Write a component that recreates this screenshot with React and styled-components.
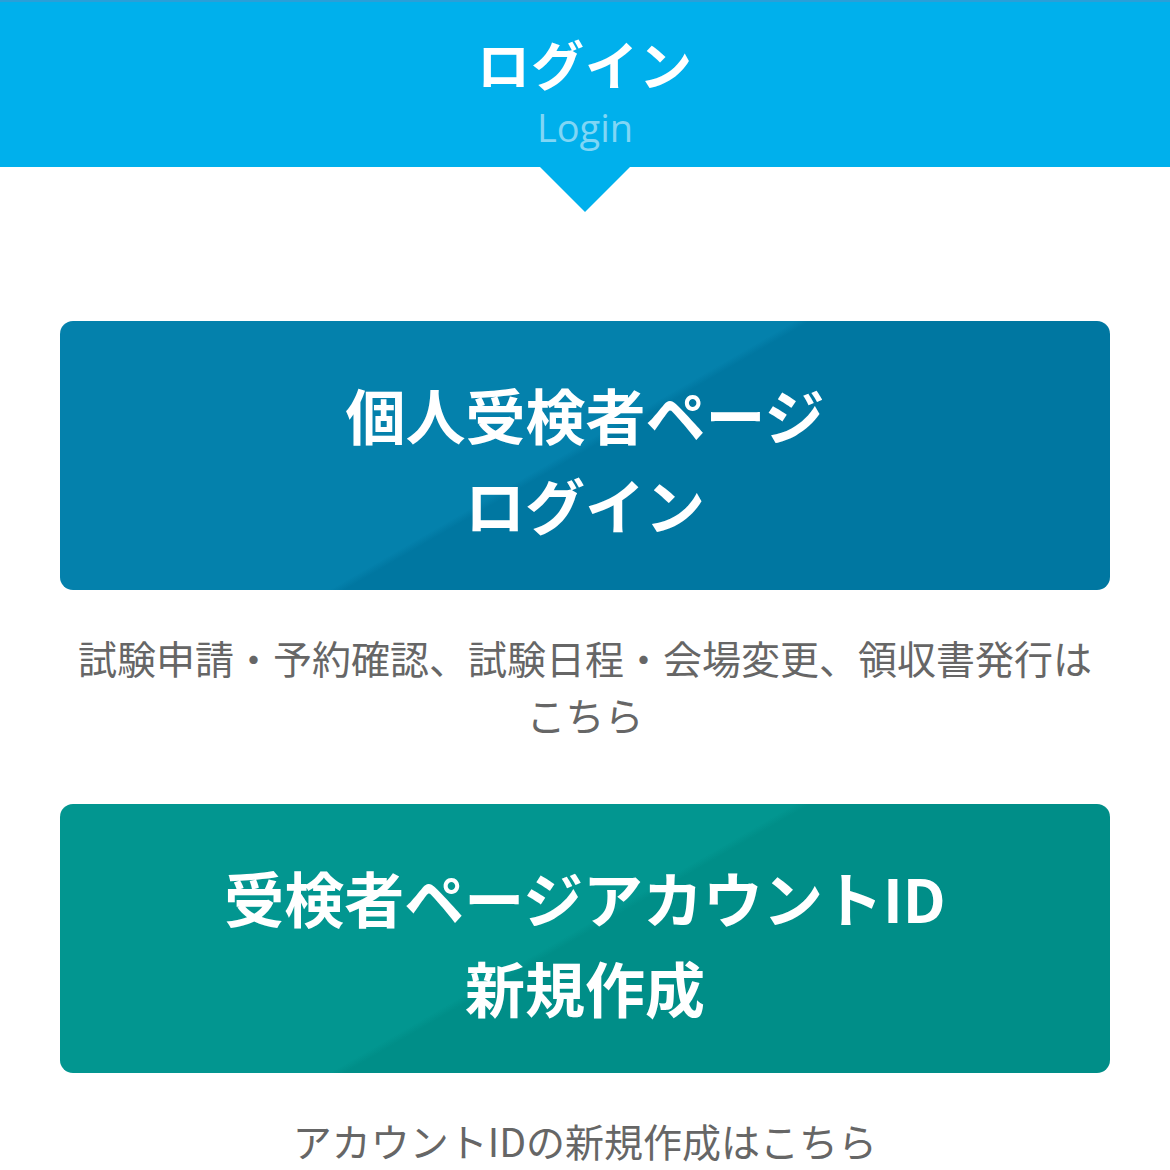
import React from "react";
import styled, { createGlobalStyle } from "styled-components";

const GlobalStyle = createGlobalStyle`
  body {
    margin: 0;
    background: #ffffff;
    font-family: "Noto Sans CJK JP", "Noto Sans", sans-serif;
  }
`;

function App() {
  return (
    <Page>
      <GlobalStyle />
      <Header>
        <HeaderTitle>ログイン</HeaderTitle>
        <HeaderSub>Login</HeaderSub>
      </Header>
      <Arrow />
      <Content>
        <Block>
          <BigButton light="#0481ac" dark="#0077a1">
            個人受検者ページ
            <br />
            ログイン
          </BigButton>
          <Note>
            試験申請・予約確認、試験日程・会場変更、領収書発行は
            <br />
            こちら
          </Note>
        </Block>
        <Block>
          <BigButton light="#029690" dark="#008e88">
            受検者ページアカウントID
            <br />
            新規作成
          </BigButton>
          <Note>アカウントIDの新規作成はこちら</Note>
        </Block>
      </Content>
    </Page>
  );
}

export default App;

const Page = styled.div`
  width: 1170px;
  min-height: 1170px;
  display: flex;
  flex-direction: column;
  align-items: center;
  overflow: hidden;
`;

const Header = styled.header`
  width: 100%;
  height: 167px;
  background: #00b0ec;
  border-top: 2px solid #2a9fd8;
  box-sizing: border-box;
  display: flex;
  flex-direction: column;
  align-items: center;
  padding-top: 31px;
`;

const HeaderTitle = styled.h1`
  margin: 0;
  color: #ffffff;
  font-size: 53px;
  font-weight: 700;
  line-height: 60px;
  letter-spacing: 1px;
`;

const HeaderSub = styled.div`
  color: #80d6f5;
  font-family: "Open Sans", "Noto Sans", sans-serif;
  font-size: 38px;
  line-height: 50px;
  margin-top: 9px;
`;

const Arrow = styled.div`
  width: 0;
  height: 0;
  border-left: 45px solid transparent;
  border-right: 45px solid transparent;
  border-top: 45px solid #00b0ec;
`;

const Content = styled.main`
  width: 1050px;
  display: flex;
  flex-direction: column;
  gap: 61px;
  padding-top: 109px;
`;

const Block = styled.section`
  display: flex;
  flex-direction: column;
  gap: 39px;
`;

const BigButton = styled.a`
  display: flex;
  align-items: center;
  justify-content: center;
  height: 269px;
  border-radius: 13px;
  background: linear-gradient(150deg, ${(p) => p.light} 48.5%, ${(p) => p.dark} 49.5%);
  color: #ffffff;
  font-size: 60px;
  font-weight: 700;
  line-height: 90px;
  text-align: center;
  text-decoration: none;
  padding-top: 6px;
  box-sizing: border-box;
`;

const Note = styled.p`
  margin: 0;
  color: #666666;
  font-size: 39px;
  line-height: 57px;
  text-align: center;
`;
